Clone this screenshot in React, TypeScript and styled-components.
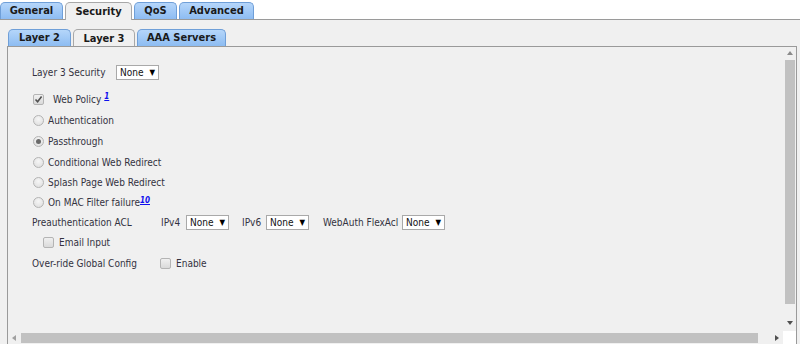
import React from "react";
import styled, { createGlobalStyle } from "styled-components";

const GlobalStyle = createGlobalStyle`
  html, body {
    margin: 0;
    padding: 0;
    background: #ffffff;
    height: 100%;
    overflow: hidden;
  }
  body {
    font-family: Tahoma, "DejaVu Sans Condensed", "DejaVu Sans", sans-serif;
    font-size: 10px;
    color: #33323f;
  }
  #root {
    height: 100%;
  }
`;

const Page = styled.div`
  display: flex;
  flex-direction: column;
  height: 344px;
  width: 800px;
`;

const TabBar = styled.div`
  display: flex;
  align-items: flex-end;
  gap: 2px;
  height: 19px;
  border-bottom: 1px solid #9a9a9a;
`;

const Tab = styled.div<{ $active?: boolean; $w: number }>`
  box-sizing: border-box;
  width: ${({ $w }) => $w}px;
  height: ${({ $active }) => ($active ? 18 : 17)}px;
  margin-bottom: ${({ $active }) => ($active ? -1 : 0)}px;
  padding-bottom: 1px;
  display: flex;
  align-items: center;
  justify-content: center;
  font-weight: bold;
  font-size: 11px;
  color: #1a1a1a;
  border: 1px solid ${({ $active }) => ($active ? "#a8a8a8" : "#6f9fd8")};
  border-bottom: none;
  border-radius: 5px 5px 0 0;
  background: ${({ $active }) =>
    $active ? "#f0f0f0" : "linear-gradient(#b5d6fa, #8dbcf2)"};
`;

const Outer = styled.div`
  flex: 1;
  background: #f0f0f0;
  display: flex;
  flex-direction: column;
  padding: 8px 3px 0 7px;
  min-height: 0;
`;

const SubTabBar = styled.div`
  display: flex;
  align-items: flex-end;
  gap: 2px;
  height: 18px;
  padding-left: 1px;
`;

const Panel = styled.div`
  flex: 1;
  min-height: 0;
  border: 1px solid #9a9a9a;
  border-bottom: none;
  display: flex;
  flex-direction: column;
  background: #f0f0f0;
`;

const PanelBody = styled.div`
  flex: 1;
  display: flex;
  min-height: 0;
`;

const Content = styled.div`
  flex: 1;
  padding: 15px 0 0 24px;
  display: flex;
  flex-direction: column;
`;

const Row = styled.div<{ $h?: number; $top?: number; $indent?: number }>`
  display: flex;
  align-items: center;
  height: ${({ $h }) => $h ?? 20.5}px;
  margin-top: ${({ $top }) => $top ?? 0}px;
  padding-left: ${({ $indent }) => $indent ?? 0}px;
  white-space: nowrap;
`;

const Label = styled.span<{ $w?: number; $gap?: number }>`
  display: inline-block;
  width: ${({ $w }) => ($w ? `${$w}px` : "auto")};
  margin-left: ${({ $gap }) => $gap ?? 0}px;
`;

const Select = styled.span<{ $gap?: number }>`
  box-sizing: border-box;
  display: inline-flex;
  align-items: center;
  justify-content: space-between;
  height: 15px;
  width: 43px;
  padding: 0 3px;
  margin-left: ${({ $gap }) => $gap ?? 0}px;
  background: #ffffff;
  border: 1px solid #a9a9a9;
  color: #111;
  font-size: 10px;
`;

const Caret = styled.span`
  font-size: 8px;
  color: #000;
`;

const Radio = styled.span<{ $checked?: boolean }>`
  box-sizing: border-box;
  width: 11px;
  height: 11px;
  border-radius: 50%;
  border: 1px solid #b4b4b4;
  background: radial-gradient(circle at 50% 35%, #f6f6f6, #dcdcdc);
  display: inline-flex;
  align-items: center;
  justify-content: center;
  margin-left: 1px;
  margin-right: 4px;
  &::after {
    content: "";
    width: 5px;
    height: 5px;
    border-radius: 50%;
    background: ${({ $checked }) => ($checked ? "#6a6a6a" : "transparent")};
  }
`;

const Box = styled.span<{ $gap?: number }>`
  box-sizing: border-box;
  width: 11px;
  height: 11px;
  border: 1px solid #b4b4b4;
  border-radius: 2px;
  background: linear-gradient(#f0f0f0, #dadada);
  display: inline-flex;
  align-items: center;
  justify-content: center;
  margin-left: ${({ $gap }) => $gap ?? 0}px;
`;

const Sup = styled.a<{ $gap?: number }>`
  color: #1010ee;
  font-size: 8px;
  font-weight: bold;
  font-style: italic;
  text-decoration: underline;
  align-self: flex-start;
  margin-top: 3px;
  margin-left: ${({ $gap }) => $gap ?? 3}px;
`;

const VScroll = styled.div`
  width: 13px;
  display: flex;
  flex-direction: column;
  align-items: center;
  padding: 4px 0 6px;
`;

const Spacer = styled.div`
  flex: 1;
`;

const Arrow = styled.span<{ $dir: "up" | "down" | "left" | "right" }>`
  width: 0;
  height: 0;
  border: 3px solid transparent;
  ${({ $dir }) =>
    $dir === "up"
      ? "border-bottom: 4px solid #8a8a8a; border-top-width: 0;"
      : $dir === "down"
      ? "border-top: 4px solid #505050; border-bottom-width: 0;"
      : $dir === "left"
      ? "border-right: 4px solid #a0a0a0; border-left-width: 0;"
      : "border-left: 4px solid #505050; border-right-width: 0;"}
`;

const VThumb = styled.div`
  width: 10px;
  height: 244px;
  margin-top: 5px;
  background: #c1c1c1;
`;

const HScroll = styled.div`
  height: 13px;
  display: flex;
  align-items: center;
`;

const ArrowSlot = styled.span`
  display: inline-flex;
  align-items: center;
  justify-content: center;
  width: 8px;
  margin-left: 2px;
`;

const HThumb = styled.div`
  width: 737px;
  height: 10px;
  background: #c1c1c1;
  margin: 0 17px 0 3px;
`;

const Corner = styled.div`
  margin-left: auto;
  width: 13px;
  height: 13px;
  background: #ffffff;
`;

const Check = () => (
  <svg width="9" height="9" viewBox="0 0 9 9">
    <path d="M1.5 4.5 L3.6 6.8 L7.6 1.6" fill="none" stroke="#505050" strokeWidth="1.6" />
  </svg>
);

const Dropdown = () => (
  <Select>
    None <Caret>▼</Caret>
  </Select>
);

export default function App() {
  return (
    <>
      <GlobalStyle />
      <Page>
        <TabBar>
          <Tab $w={63}>General</Tab>
          <Tab $w={67} $active>Security</Tab>
          <Tab $w={43}>QoS</Tab>
          <Tab $w={75}>Advanced</Tab>
        </TabBar>
        <Outer>
          <SubTabBar>
            <Tab $w={63}>Layer 2</Tab>
            <Tab $w={62} $active>Layer 3</Tab>
            <Tab $w={89}>AAA Servers</Tab>
          </SubTabBar>
          <Panel>
            <PanelBody>
              <Content>
                <Row $h={20}>
                  <Label $w={84}>Layer 3 Security</Label>
                  <Dropdown />
                </Row>
                <Row $top={7} $h={21}>
                  <Box $gap={1}>
                    <Check />
                  </Box>
                  <Label $gap={9}>Web Policy</Label>
                  <Sup>1</Sup>
                </Row>
                <Row $h={21.5}>
                  <Radio />
                  <Label>Authentication</Label>
                </Row>
                <Row $h={20.5}>
                  <Radio $checked />
                  <Label>Passthrough</Label>
                </Row>
                <Row $h={20.5}>
                  <Radio />
                  <Label>Conditional Web Redirect</Label>
                </Row>
                <Row $h={20.5}>
                  <Radio />
                  <Label>Splash Page Web Redirect</Label>
                </Row>
                <Row $h={19.5}>
                  <Radio />
                  <Label>On MAC Filter failure</Label>
                  <Sup $gap={0}>10</Sup>
                </Row>
                <Row $h={20}>
                  <Label $w={129}>Preauthentication ACL</Label>
                  <Label $w={25}>IPv4</Label>
                  <Dropdown />
                  <Label $w={24} $gap={13}>IPv6</Label>
                  <Dropdown />
                  <Label $w={79} $gap={14}>WebAuth FlexAcl</Label>
                  <Dropdown />
                </Row>
                <Row $h={20} $indent={11}>
                  <Box />
                  <Label $gap={5}>Email Input</Label>
                </Row>
                <Row $h={21}>
                  <Label $w={128}>Over-ride Global Config</Label>
                  <Box />
                  <Label $gap={5}>Enable</Label>
                </Row>
              </Content>
              <VScroll>
                <Arrow $dir="up" />
                <VThumb />
                <Spacer />
                <Arrow $dir="down" />
              </VScroll>
            </PanelBody>
            <HScroll>
              <ArrowSlot>
                <Arrow $dir="left" />
              </ArrowSlot>
              <HThumb />
              <Arrow $dir="right" />
              <Corner />
            </HScroll>
          </Panel>
        </Outer>
      </Page>
    </>
  );
}
